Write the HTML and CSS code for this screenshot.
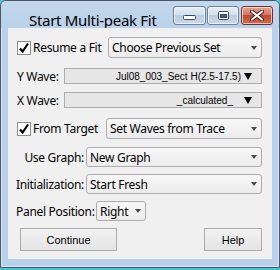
FILE: index.html
```html
<!DOCTYPE html>
<html>
<head>
<meta charset="utf-8">
<link rel="stylesheet" href="styles.css">
</head>
<body>
<div class="window">
  <div class="titlebar">
    <span class="title">Start Multi-peak Fit</span>
    <div class="caption">
      <span class="cbtn min"><svg width="13" height="5" viewBox="0 0 13 5"><rect x="0.5" y="0.5" width="12" height="4" rx="1" fill="#fff" stroke="#394a5e"/></svg></span>
      <span class="cbtn max"><svg width="11" height="9" viewBox="0 0 11 9"><rect x="0.5" y="0.5" width="10" height="8" rx="1" fill="#fff" stroke="#394a5e"/><rect x="2.5" y="3.5" width="6" height="3" fill="#4d5f78" stroke="#394a5e" stroke-width="1"/></svg></span>
      <span class="cbtn close"><svg width="14" height="11" viewBox="0 0 14 11"><path d="M2 1.5 L12 9.5 M12 1.5 L2 9.5" stroke="#3b1d18" stroke-width="4" stroke-linecap="round"/><path d="M2 1.5 L12 9.5 M12 1.5 L2 9.5" stroke="#fff" stroke-width="2.2" stroke-linecap="round"/></svg></span>
    </div>
  </div>
  <div class="client">
    <div class="row r1">
      <label class="check"><svg class="box" width="14" height="14" viewBox="0 0 14 14"><rect x="0.5" y="0.5" width="13" height="13" fill="#fff" stroke="#8f8f8f"/><path d="M3 7.5 L5.6 10.5 L11 2.5" fill="none" stroke="#000" stroke-width="2.2"/></svg>Resume a Fit</label>
      <div class="popup w154">Choose Previous Set<span class="arrow"></span></div>
    </div>
    <div class="row r2">
      <span class="lbl">Y Wave:</span>
      <div class="field">Jul08_003_Sect H(2.5-17.5)<span class="tri"></span></div>
    </div>
    <div class="row r3">
      <span class="lbl">X Wave:</span>
      <div class="field"><span class="pad">_calculated_</span><span class="tri"></span></div>
    </div>
    <div class="row r4">
      <label class="check"><svg class="box" width="14" height="14" viewBox="0 0 14 14"><rect x="0.5" y="0.5" width="13" height="13" fill="#fff" stroke="#8f8f8f"/><path d="M3 7.5 L5.6 10.5 L11 2.5" fill="none" stroke="#000" stroke-width="2.2"/></svg>From Target</label>
      <div class="popup w156">Set Waves from Trace<span class="arrow"></span></div>
    </div>
    <div class="row r5">
      <span class="rlbl">Use Graph:</span>
      <div class="popup grow">New Graph<span class="arrow"></span></div>
    </div>
    <div class="row r6">
      <span class="rlbl">Initialization:</span>
      <div class="popup grow">Start Fresh<span class="arrow"></span></div>
    </div>
    <div class="row r7">
      <span class="plbl">Panel Position:</span>
      <div class="popup small">Right<span class="arrow"></span></div>
    </div>
    <div class="row buttons">
      <button class="btn cont">Continue</button>
      <button class="btn help">Help</button>
    </div>
  </div>
</div>
</body>
</html>
```
FILE: styles.css
```css
html, body {
  margin: 0;
  padding: 0;
}
body {
  width: 280px;
  height: 270px;
  background: #4cc4d6;
  overflow: hidden;
  font-family: "Noto Sans", "Open Sans", sans-serif;
}
.window {
  box-sizing: border-box;
  width: 280px;
  height: 268px;
  border: 1px solid #4b5666;
  border-radius: 6px 6px 0 0;
  background: #b9d1ea;
  padding: 0 7px 8px 7px;
  box-shadow: inset 0 0 0 1px rgba(255,255,255,0.45);
  display: flex;
  flex-direction: column;
}
.titlebar {
  height: 27px;
  display: flex;
  align-items: flex-start;
  justify-content: space-between;
  background: linear-gradient(#c3d7ec, #b9d1ea);
  margin: 0 -7px;
  padding: 0 6px 0 28px;
  border-radius: 5px 5px 0 0;
}
.title {
  font-size: 15px;
  line-height: 20px;
  padding-top: 9px;
  color: #000;
  letter-spacing: -0.3px;
}
.caption {
  display: flex;
  margin-top: 5px;
}
.cbtn {
  box-sizing: border-box;
  height: 19px;
  width: 33px;
  border: 1px solid #6f7f94;
  border-radius: 3px;
  display: flex;
  align-items: center;
  justify-content: center;
  background: linear-gradient(#e6eef8, #d3dfee 45%, #bccde3 50%, #c9d8ea);
  box-shadow: inset 0 0 0 1px rgba(255,255,255,0.6);
}
.cbtn.min { align-items: flex-end; padding-bottom: 4px; }
.cbtn.max { width: 32px; margin-left: 1px; }
.cbtn.close {
  width: 32px;
  margin-left: 2px;
  border-color: #6e3328;
  background: linear-gradient(#e8a493, #d27865 45%, #c14a32 50%, #cf6a4f);
}
.client {
  flex: 1;
  background: #f0f0f0;
  padding: 9px 10px 0 9px;
  display: flex;
  flex-direction: column;
  font-size: 12px;
  letter-spacing: -0.3px;
  color: #000;
}
.row {
  display: flex;
  align-items: center;
  justify-content: space-between;
}
.r1 { height: 21px; }
.r2 { height: 16px; margin-top: 10px; }
.r3 { height: 16px; margin-top: 8px; }
.r4 { height: 21px; margin-top: 10px; }
.r5 { height: 20px; margin-top: 8px; }
.r6 { height: 20px; margin-top: 7px; }
.r7 { height: 20px; margin-top: 7px; justify-content: flex-start; }
.buttons { height: 23px; margin-top: 7px; padding-left: 3px; }
.check {
  display: flex;
  align-items: center;
  gap: 2px;
  white-space: nowrap;
}
.box { flex: none; }
.lbl { white-space: nowrap; }
.rlbl {
  width: 69px;
  text-align: right;
  white-space: nowrap;
  margin-left: -2px;
}
.plbl {
  width: 80px;
  white-space: nowrap;
  margin-left: -1px;
}
.popup {
  box-sizing: border-box;
  height: 100%;
  border: 1px solid #acacac;
  border-radius: 3px;
  background: linear-gradient(#f7f7f7, #ececec);
  display: flex;
  align-items: center;
  padding-left: 3px;
  white-space: nowrap;
}
.w154 { width: 154px; }
.w156 { width: 156px; }
.grow { width: 176px; }
.small { width: 50px; }
.arrow {
  margin-left: auto;
  margin-right: 4px;
  width: 0;
  height: 0;
  border-left: 3.5px solid transparent;
  border-right: 3.5px solid transparent;
  border-top: 4px solid #4a4a4a;
}
.field {
  box-sizing: border-box;
  width: 198px;
  height: 16px;
  border: 1px solid #adadad;
  background: #e6e6e6;
  display: flex;
  align-items: center;
  justify-content: flex-end;
  padding-right: 9px;
  font-family: "Liberation Sans", Arial, sans-serif;
  font-size: 10px;
  letter-spacing: 0;
  white-space: nowrap;
}
.pad { margin-right: 8px; }
.tri {
  margin-left: 3px;
  width: 0;
  height: 0;
  border-left: 4px solid transparent;
  border-right: 4px solid transparent;
  border-top: 7px solid #000;
}
.btn {
  box-sizing: border-box;
  height: 23px;
  border: 1px solid #acacac;
  background: linear-gradient(#f2f2f2, #e4e4e4);
  font-family: "Liberation Sans", Arial, sans-serif;
  font-size: 11px;
  color: #000;
  padding: 0;
}
.cont { width: 97px; }
.help { width: 58px; }
```
